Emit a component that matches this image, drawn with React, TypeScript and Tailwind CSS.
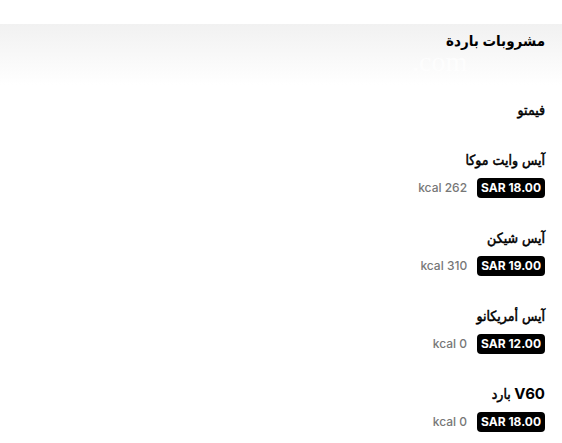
const items = [
  { name: 'آيس وايت موكا', price: '18.00', kcal: 262 },
  { name: 'آيس شيكن', price: '19.00', kcal: 310 },
  { name: 'آيس أمريكانو', price: '12.00', kcal: 0 },
  { name: 'بارد', latin: 'V60', price: '18.00', kcal: 0 },
]

export default function App() {
  return (
    <div dir="rtl" className="min-h-[443px] bg-white font-['Inter','DejaVu_Sans_Condensed','DejaVu_Sans',sans-serif] text-black">
      <div className="h-[24px] bg-white" />

      <div className="relative h-[61px] overflow-hidden bg-gradient-to-b from-[#f1f1f1] to-white px-[17px] pt-[7px]">
        <span
          dir="ltr"
          className="pointer-events-none absolute left-[412px] top-[22px] font-['Liberation_Serif',serif] text-[28px] leading-[32px] text-white/70"
        >
          .com
        </span>
        <h1 className="relative text-[15px] font-bold leading-[20px] [font-stretch:condensed]">مشروبات باردة</h1>
      </div>

      <div className="flex flex-col gap-[30px] px-[17px] pt-[15px]">
        <div className="text-[14px] leading-[20px] [font-stretch:condensed] [-webkit-text-stroke:0.5px_black]">فيمتو</div>

        {items.map((item) => (
          <div key={item.name + item.price} className="flex flex-col">
            <div className="text-[14px] leading-[20px] [font-stretch:condensed] [-webkit-text-stroke:0.5px_black]">
              {item.latin && <span className="text-[15px] font-bold [-webkit-text-stroke:0]">{item.latin} </span>}
              {item.name}
            </div>
            <div className="mt-[8px] flex items-center gap-[10px]">
              <span dir="ltr" className="rounded-[4px] bg-black px-[4px] text-[12px] font-bold leading-[20px] text-white">
                SAR {item.price}
              </span>
              <span className="text-[12px] font-medium leading-[20px] text-[#777]">{item.kcal} kcal</span>
            </div>
          </div>
        ))}
      </div>
    </div>
  )
}
